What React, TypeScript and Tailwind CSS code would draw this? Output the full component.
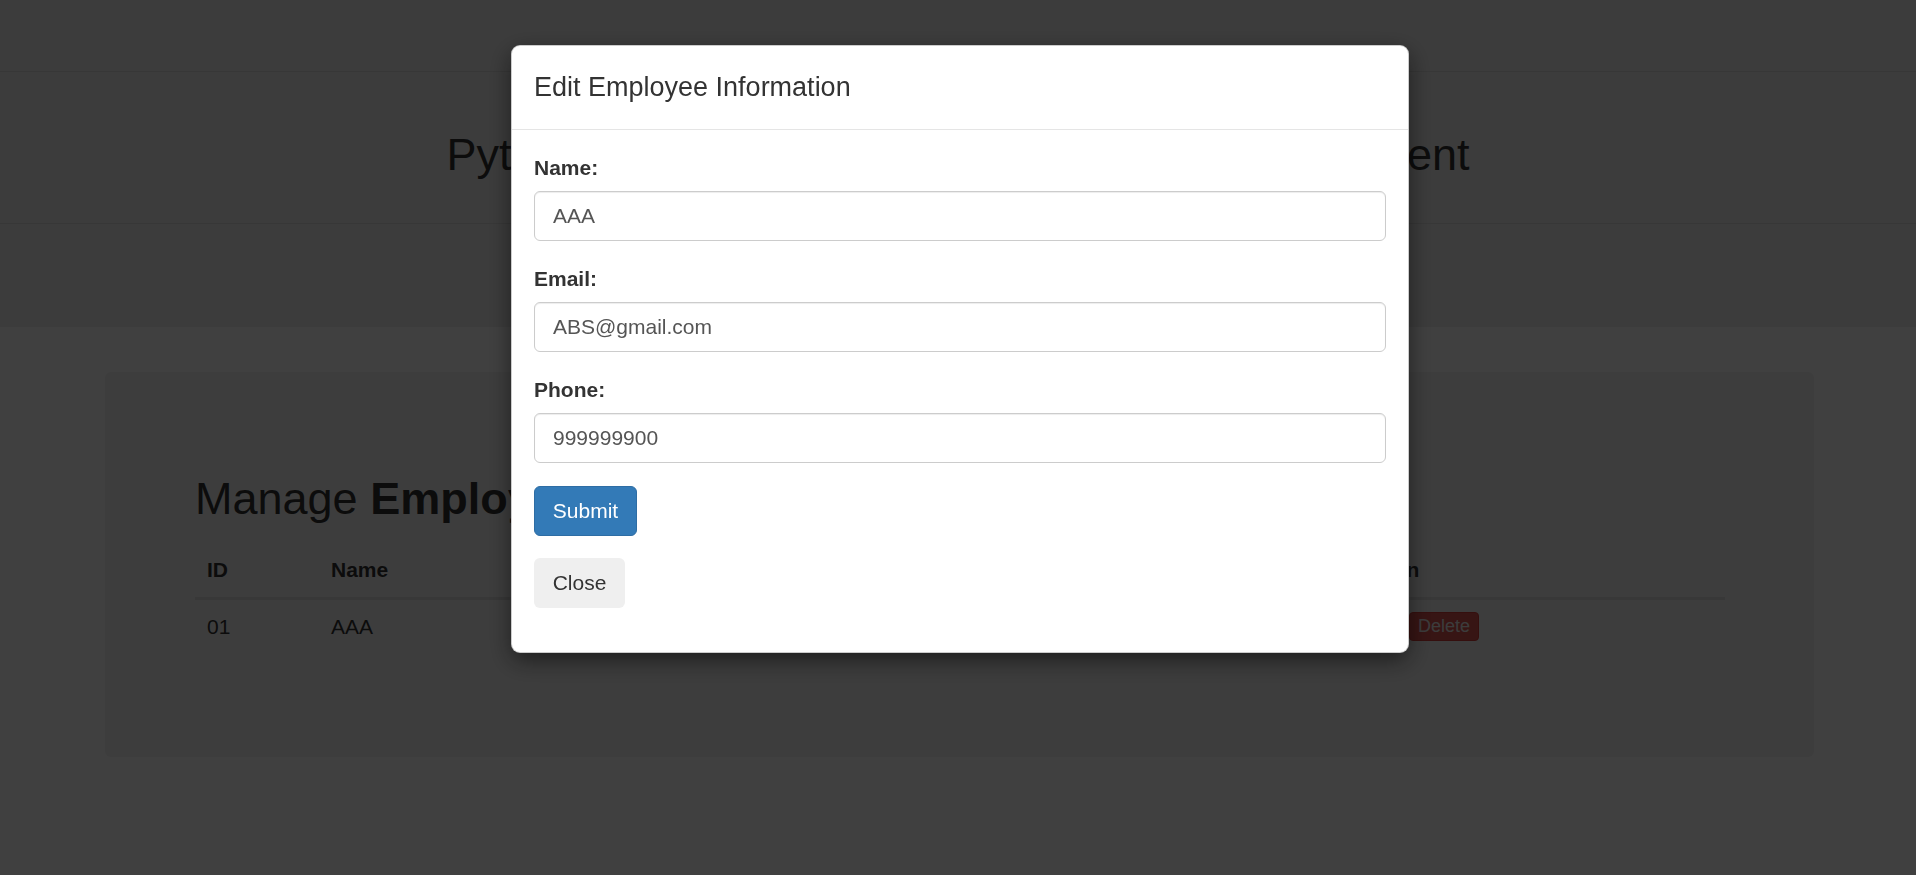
import React from "react";

const employees = [
  { id: "01", name: "AAA", email: "ABS@gmail.com", phone: "999999900" },
];

function Field({ label, value }: { label: string; value: string }) {
  return (
    <div className="mb-[23px]">
      <label className="block h-[30px] text-[21px] font-bold leading-[30px] text-[#333]">{label}</label>
      <input
        readOnly
        value={value}
        className="mt-[8px] block h-[50px] w-full rounded-[6px] border border-[#ccc] bg-white px-[18px] text-[21px] text-[#555] shadow-[inset_0_1px_1px_rgba(0,0,0,0.075)] outline-none"
      />
    </div>
  );
}

export default function App() {
  const emp = employees[0];

  return (
    <div className="min-h-screen bg-white font-['Liberation_Sans',Arial,sans-serif] text-[#333]">
      {/* page header */}
      <div className="h-[327px] bg-[#eee] pt-[71px]">
        <div className="h-[153px] border-y border-[#dcdcdc] pt-[58px] text-center">
          <h1 className="text-[45px] leading-[1.1]">Python Flask SQLAlchemy Employee Management</h1>
        </div>
      </div>

      {/* employee table card */}
      <div className="ml-[105px] mt-[45px] h-[385px] w-[1709px] rounded-[6px] bg-[#f3f3f3] px-[90px] pt-[102px]">
        <h2 className="text-[45px] leading-[1.1]">
          Manage <b>Employees</b>
        </h2>
        <table className="mt-[19px] w-[1530px] table-fixed border-collapse text-left text-[21px] leading-[30px]">
          <colgroup>
            <col className="w-[124px]" />
            <col className="w-[330px]" />
            <col className="w-[420px]" />
            <col className="w-[273px]" />
            <col />
          </colgroup>
          <thead>
            <tr className="border-b-[3px] border-[#ddd]">
              <th className="p-[12px] font-bold">ID</th>
              <th className="p-[12px] font-bold">Name</th>
              <th className="p-[12px] font-bold">Email</th>
              <th className="p-[12px] font-bold">Phone</th>
              <th className="p-[12px] font-bold">Action</th>
            </tr>
          </thead>
          <tbody>
            {employees.map(e => (
              <tr key={e.id}>
                <td className="p-[12px]">{e.id}</td>
                <td className="p-[12px]">{e.name}</td>
                <td className="p-[12px]">{e.email}</td>
                <td className="p-[12px]">{e.phone}</td>
                <td className="p-[12px]">
                  <div className="flex items-center gap-[6px]">
                    <button className="rounded-[4px] border border-[#269abc] bg-[#5bc0de] px-[8px] text-[18px] leading-[27px] text-white">Edit</button>
                    <button className="rounded-[4px] border border-[#d43f3a] bg-[#d9534f] px-[8px] text-[18px] leading-[27px] text-[#eee]">Delete</button>
                  </div>
                </td>
              </tr>
            ))}
          </tbody>
        </table>
      </div>

      {/* modal */}
      <div className="fixed inset-0 z-40 bg-black/75" />
      <div className="fixed inset-0 z-50 overflow-y-auto">
        <div className="ml-[511px] mt-[45px] w-[898px] rounded-[9px] border border-black/20 bg-white shadow-[0_8px_23px_rgba(0,0,0,0.5)]">
          <div className="border-b border-[#e5e5e5] px-[22px] pb-[22px] pt-[22px]">
            <h4 className="text-[27px] leading-[39px] text-[#333]">Edit Employee Information</h4>
          </div>
          <div className="px-[22px] pb-[22px] pt-[23px]">
            <Field label="Name:" value={emp.name} />
            <Field label="Email:" value={emp.email} />
            <Field label="Phone:" value={emp.phone} />
            <div className="mb-[22px]">
              <button className="h-[50px] w-[103px] rounded-[6px] border border-[#2e6da4] bg-[#337ab7] text-[21px] text-white">Submit</button>
            </div>
            <div className="mb-[22px]">
              <button className="h-[50px] w-[91px] rounded-[6px] bg-[#efefef] text-[21px] text-[#333]">Close</button>
            </div>
          </div>
        </div>
      </div>
    </div>
  );
}
